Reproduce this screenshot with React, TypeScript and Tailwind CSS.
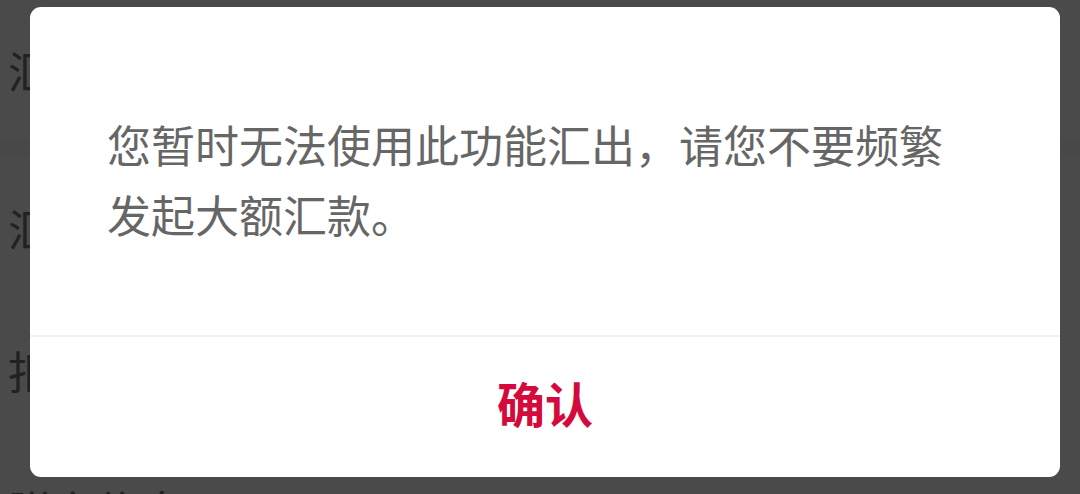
import React from "react";

const rows = [
  { label: "汇款方式", h: "h-[140px]" },
  { label: "汇款金额", h: "h-[145px]" },
  { label: "扣款账户", h: "h-[140px]" },
  { label: "附言信息", h: "h-[140px]" },
];

const App: React.FC = () => {
  return (
    <div
      className="relative w-[1080px] h-[494px] overflow-hidden bg-white"
      style={{ fontFamily: '"Noto Sans CJK SC", "Noto Sans", sans-serif' }}
    >
      {/* page underneath */}
      <div className="flex flex-col">
        <div className={`${rows[0].h} flex items-center pl-[8px] text-[44px] text-[#777]`}>
          {rows[0].label}
        </div>
        <div className="h-[15px] bg-[#f7f7f7]" />
        {rows.slice(1).map((r) => (
          <div
            key={r.label}
            className={`${r.h} flex items-center pl-[8px] text-[44px] text-[#777]`}
          >
            {r.label}
          </div>
        ))}
      </div>

      {/* modal */}
      <div className="absolute inset-0 bg-black/[0.71] flex items-start pt-[7px] pl-[30px]">
        <div className="w-[1030px] bg-white rounded-[11px] flex flex-col">
          <div className="pt-[102px] pb-[86px] pl-[77px] pr-[110px] text-[44px] leading-[70px] text-[#666666]">
            您暂时无法使用此功能汇出，请您不要频繁发起大额汇款。
          </div>
          <div className="h-[2px] bg-[#f2f2f2]" />
          <div className="h-[140px] flex items-center justify-center pb-[10px]">
            <span className="text-[48px] font-bold text-[#d40a3c]">确认</span>
          </div>
        </div>
      </div>
    </div>
  );
};

export default App;
